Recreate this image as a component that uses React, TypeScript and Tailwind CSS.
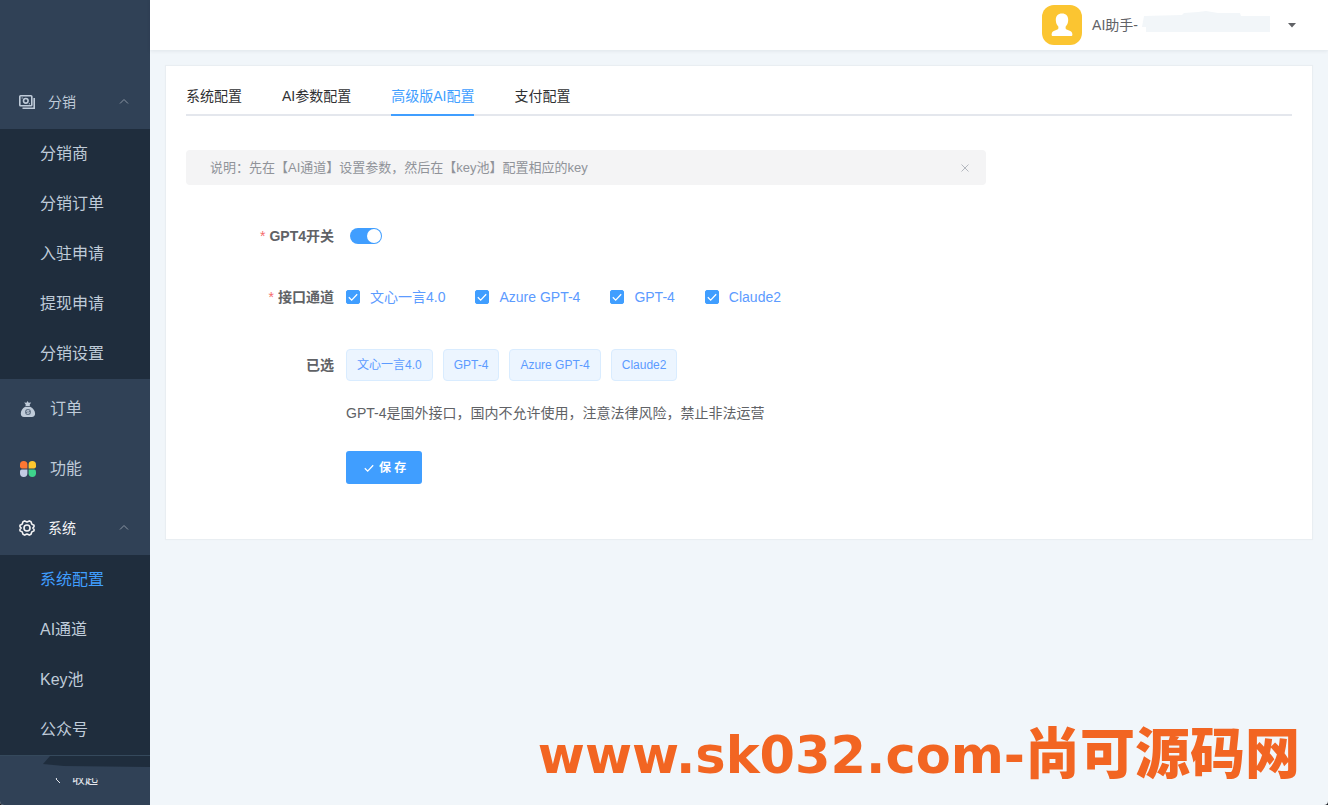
import { useState } from 'react';

const DISTRIBUTION = ['分销商', '分销订单', '入驻申请', '提现申请', '分销设置'];
const SYSTEM = ['系统配置', 'AI通道', 'Key池', '公众号'];
const TABS = ['系统配置', 'AI参数配置', '高级版AI配置', '支付配置'];
const CHANNELS = ['文心一言4.0', 'Azure GPT-4', 'GPT-4', 'Claude2'];

function MoneyIcon() {
  return (
    <svg className="w-4 h-4" viewBox="0 0 16 16" fill="none" stroke="currentColor" strokeWidth="1.6">
      <rect x="0.8" y="1.8" width="12" height="10" rx="0.8" />
      <circle cx="6.8" cy="6.8" r="2.3" />
      <path d="M15.2 4v10.2H3.5" />
      <path d="M2.6 4h1.2M9.8 9.8H11" strokeWidth="1" />
    </svg>
  );
}

function BagIcon() {
  return (
    <svg className="w-4 h-4" viewBox="0 0 16 16" fill="currentColor">
      <path d="M4.2 1.6l2.300.2L7.500 0l1.200 1.800 2.500-.2-1.500 1.900.2 1.500H5.500l.2-1.500z" />
      <path d="M5.200 5.800h5c3 1.600 4.900 4.200 4.900 6.800 0 2.300-1.200 3.400-3.300 3.400H4C1.900 16 .8 14.900.8 12.600c0-2.600 1.600-5.200 4.400-6.800z" />
      <circle cx="8" cy="11" r="2.900" fill="#5b6b80" />
      <path d="M9.400 9.600H7.300c-1 0-1 1.400 0 1.400h1.400c1 0 1 1.400 0 1.400H6.600M8 8.800v4.400" fill="none" stroke="#bfcbd9" strokeWidth="0.8" />
    </svg>
  );
}

function PetalsIcon() {
  return (
    <svg className="w-4 h-4" viewBox="0 0 16 16">
      <path d="M3.700 0a3.700 3.700 0 0 1 3.700 3.700V7.400H1.800A1.800 1.800 0 0 1 0 5.600V3.700A3.700 3.700 0 0 1 3.700 0z" fill="#ff7733" />
      <path d="M12.300 0A3.700 3.700 0 0 1 16 3.700v1.900a1.800 1.800 0 0 1-1.800 1.800H8.600V3.700A3.700 3.700 0 0 1 12.300 0z" fill="#ffc72e" />
      <path d="M1.800 8.600h5.600v3.700A3.700 3.700 0 0 1 0 12.300v-1.900a1.800 1.800 0 0 1 1.800-1.800z" fill="#c3cbe3" />
      <path d="M8.600 8.600h5.600a1.800 1.800 0 0 1 1.800 1.800v1.900a3.700 3.700 0 0 1-7.400 0z" fill="#3ed48c" />
    </svg>
  );
}

function GearIcon() {
  return (
    <svg className="w-4 h-4" viewBox="0 0 16 16" fill="none" stroke="currentColor" strokeWidth="1.6" strokeLinejoin="round">
      <path d="M5.700.9L8 1.900l2.300-1 1.700.9.800 2.300 2.200 1.100v1.600L13.800 8l1.200 1.200v1.600l-2.200 1.100-.8 2.300-1.700.9-2.300-1-2.300 1-1.700-.9-.8-2.300L1 10.800V9.200L2.200 8 1 6.800V5.200l2.200-1.100L4 1.800z" />
      <circle cx="8" cy="8" r="3" />
    </svg>
  );
}

function ChevronUp() {
  return (
    <svg className="w-2.5 h-2.5 mr-[21px] ml-auto text-[#8b95a3]" viewBox="0 0 10 10" fill="none" stroke="currentColor">
      <path d="M1 6.500L5 2.500l4 4" />
    </svg>
  );
}

function Check({ className }: { className: string }) {
  return (
    <svg className={className} viewBox="0 0 14 14" fill="none" stroke="currentColor" strokeWidth="1.300">
      <path d="M2.800 7.200l2.900 2.900 5.500-5.800" />
    </svg>
  );
}

function SubMenu({ items, active }: { items: string[]; active?: string }) {
  return (
    <div className="bg-[#1f2d3d]">
      {items.map(item => (
        <a
          key={item}
          href="#"
          className={item === active ? 'flex items-center h-[50px] pl-10 text-base text-[#409eff]' : 'flex items-center h-[50px] pl-10 text-base text-[#bfcbd9]'}
        >
          {item}
        </a>
      ))}
    </div>
  );
}

function Sidebar() {
  return (
    <nav className="w-[150px] shrink-0 flex flex-col pt-[73px] bg-[#304156] text-[#bfcbd9]">
      <button className="flex items-center h-14 pt-0.5 pl-[19px] gap-[13px] text-sm">
        <MoneyIcon />
        分销
        <ChevronUp />
      </button>
      <SubMenu items={DISTRIBUTION} />
      <a href="#" className="flex items-center h-[60px] pl-5 gap-3.5 text-base">
        <BagIcon />
        订单
      </a>
      <a href="#" className="flex items-center h-[60px] pl-5 gap-3.5 text-base">
        <PetalsIcon />
        功能
      </a>
      <button className="flex items-center h-14 pt-0.5 pl-[19px] gap-[13px] text-sm text-[#f4f4f5]">
        <GearIcon />
        系统
        <ChevronUp />
      </button>
      <SubMenu items={SYSTEM} active="系统配置" />
      <div className="relative h-[50px] border-t border-[#35495c]">
        <button className="flex items-center w-full h-full pb-1 pl-[54px] gap-2.5 text-[13px] text-[#e4e7ed]">
          <svg className="w-2 h-3" viewBox="0 0 8 12" fill="none" stroke="currentColor">
            <path d="M6 1L2 6l4 4" />
          </svg>
          收起
        </button>
        <svg className="absolute inset-x-0 top-0 w-full h-[22px] pointer-events-none" viewBox="0 0 150 22" preserveAspectRatio="none">
          <path d="M0 0H150V22H0z" fill="#304156" />
          <path d="M50 0H150V11L64 10 43 8z" fill="#1f2d3d" />
        </svg>
      </div>
    </nav>
  );
}

function Header() {
  return (
    <header className="flex items-center justify-end h-[50px] pr-8 bg-white shadow-[0_1px_4px_rgba(0,21,41,0.08)]">
      <svg className="w-10 h-10" viewBox="0 0 40 40">
        <rect width="40" height="40" rx="12" fill="#fbc531" />
        <path
          d="M20 8.500c4 0 6.400 2.700 6.200 6.700-.1 3-1.100 4.900-2.500 6.200-.5 2.200.3 3 2.100 3.600 2.700.8 4.600 1.900 4.600 4.500 0 1-.5 1.500-1.400 1.500H11c-.9 0-1.400-.5-1.400-1.500 0-2.600 1.900-3.700 4.600-4.500 1.800-.6 2.600-1.400 2.100-3.600-1.400-1.300-2.400-3.200-2.500-6.200-.2-4 2.200-6.700 6.200-6.700z"
          fill="#fff"
        />
      </svg>
      <button className="flex items-center ml-2.5 text-sm text-[#606266]">
        AI助手-
        <svg className="ml-1 w-32 h-7" viewBox="0 0 128 28">
          <path d="M2 5L40 4 42 2 56 1 64 0 76 2 98 2 99 5 128 5V21H4V16H0z" fill="#f2f6f9" />
        </svg>
        <svg className="ml-[18px] w-2 h-1.5" viewBox="0 0 8 6" fill="currentColor">
          <path d="M0 1h8L4 5.500z" />
        </svg>
      </button>
    </header>
  );
}

export default function App() {
  const [tab, setTab] = useState('高级版AI配置');
  const [enabled, setEnabled] = useState(true);
  const [selected, setSelected] = useState(['文心一言4.0', 'GPT-4', 'Azure GPT-4', 'Claude2']);
  const [notice, setNotice] = useState(true);

  const toggle = (name: string) => {
    setSelected(selected.includes(name) ? selected.filter(s => s !== name) : [...selected, name]);
  };

  return (
    <div className="bg-[#1b1f24] font-['Liberation_Sans','Noto_Sans_CJK_SC',sans-serif]">
      <div className="relative flex min-h-screen rounded-b overflow-hidden bg-[#f1f6fa]">
        <Sidebar />
        <div className="flex-1 min-w-0">
          <Header />
          <main className="p-4">
            <section className="bg-white px-5 pt-2.5 pb-[55px] shadow-[0_0_1px_1px_rgba(0,0,0,0.03)]">
              <div role="tablist" className="flex gap-10 h-10 border-b-2 border-[#e4e7ed] text-sm">
                {TABS.map(t => (
                  <button
                    key={t}
                    role="tab"
                    aria-selected={t === tab}
                    onClick={() => setTab(t)}
                    className={t === tab ? 'h-10 pt-0.5 border-b-2 border-[#409eff] text-[#409eff]' : 'h-10 pt-0.5 border-b-2 border-transparent text-[#303133]'}
                  >
                    {t}
                  </button>
                ))}
              </div>

              {notice && (
                <div className="flex items-center justify-between mt-[34px] h-[35px] max-w-[800px] pl-6 pr-4 rounded bg-[#f4f4f5] text-[13px] text-[#909399]">
                  <p>说明：先在【AI通道】设置参数，然后在【key池】配置相应的key</p>
                  <button aria-label="关闭" onClick={() => setNotice(false)}>
                    <svg className="w-2.5 h-2.5 text-[#b4b8bf]" viewBox="0 0 10 10" fill="none" stroke="currentColor">
                      <path d="M1.500 1.500l7 7M8.500 1.500l-7 7" />
                    </svg>
                  </button>
                </div>
              )}

              <form className="mt-[31px] text-sm text-[#606266]" onSubmit={e => e.preventDefault()}>
                <div className="flex items-center h-10">
                  <label htmlFor="gpt4" className="w-40 pr-3 text-right font-bold">
                    <span className="mr-1 font-normal text-[#f56c6c]">*</span>GPT4开关
                  </label>
                  <input
                    id="gpt4"
                    type="checkbox"
                    role="switch"
                    checked={enabled}
                    onChange={e => setEnabled(e.target.checked)}
                    className="appearance-none flex items-center ml-1 w-8 h-4 p-px rounded-full bg-[#dcdfe6] checked:bg-[#409eff] before:w-3.5 before:h-3.5 before:rounded-full before:bg-white checked:before:ml-auto"
                  />
                </div>

                <fieldset className="flex items-center mt-[21px] h-10" aria-labelledby="channels">
                  <span id="channels" className="w-40 pr-3 text-right font-bold">
                    <span className="mr-1 font-normal text-[#f56c6c]">*</span>接口通道
                  </span>
                  <div className="flex gap-[30px]">
                    {CHANNELS.map(c => (
                      <label key={c} className="flex items-center gap-2.5 text-[#5c9bff]">
                        <span className="grid w-3.5 h-3.5">
                          <input
                            type="checkbox"
                            checked={selected.includes(c)}
                            onChange={() => toggle(c)}
                            className="appearance-none col-start-1 row-start-1 w-3.5 h-3.5 rounded-xs border border-[#dcdfe6] checked:border-[#409eff] checked:bg-[#409eff]"
                          />
                          <Check className="col-start-1 row-start-1 w-3.5 h-3.5 text-white pointer-events-none" />
                        </span>
                        {c}
                      </label>
                    ))}
                  </div>
                </fieldset>

                <div className="flex items-center mt-7 h-10">
                  <span className="w-40 pr-3 text-right font-bold">已选</span>
                  <div className="flex gap-2.5">
                    {selected.map(s => (
                      <span key={s} className="flex items-center h-8 px-2.5 rounded border border-[#d9ecff] bg-[#ecf5ff] text-xs text-[#5c9bff]">
                        {s}
                      </span>
                    ))}
                  </div>
                </div>

                <p className="mt-[18px] pl-40 leading-5">GPT-4是国外接口，国内不允许使用，注意法律风险，禁止非法运营</p>

                <div className="mt-7 pl-40">
                  <button type="submit" className="flex items-center gap-[3px] h-[33px] px-4 rounded-[3px] bg-[#409eff] text-xs font-bold text-white">
                    <Check className="w-3.5 h-3.5" />
                    保 存
                  </button>
                </div>
              </form>
            </section>
          </main>
        </div>

        <div className="absolute right-7 bottom-6 flex items-baseline leading-none font-black text-[#f26522] pointer-events-none">
          <span className="text-[51px] font-['DejaVu_Sans',sans-serif]">www.sk032.com-</span>
          <span className="text-[55px] font-['Noto_Sans_CJK_SC',sans-serif]">尚可源码网</span>
        </div>
      </div>
    </div>
  );
}
